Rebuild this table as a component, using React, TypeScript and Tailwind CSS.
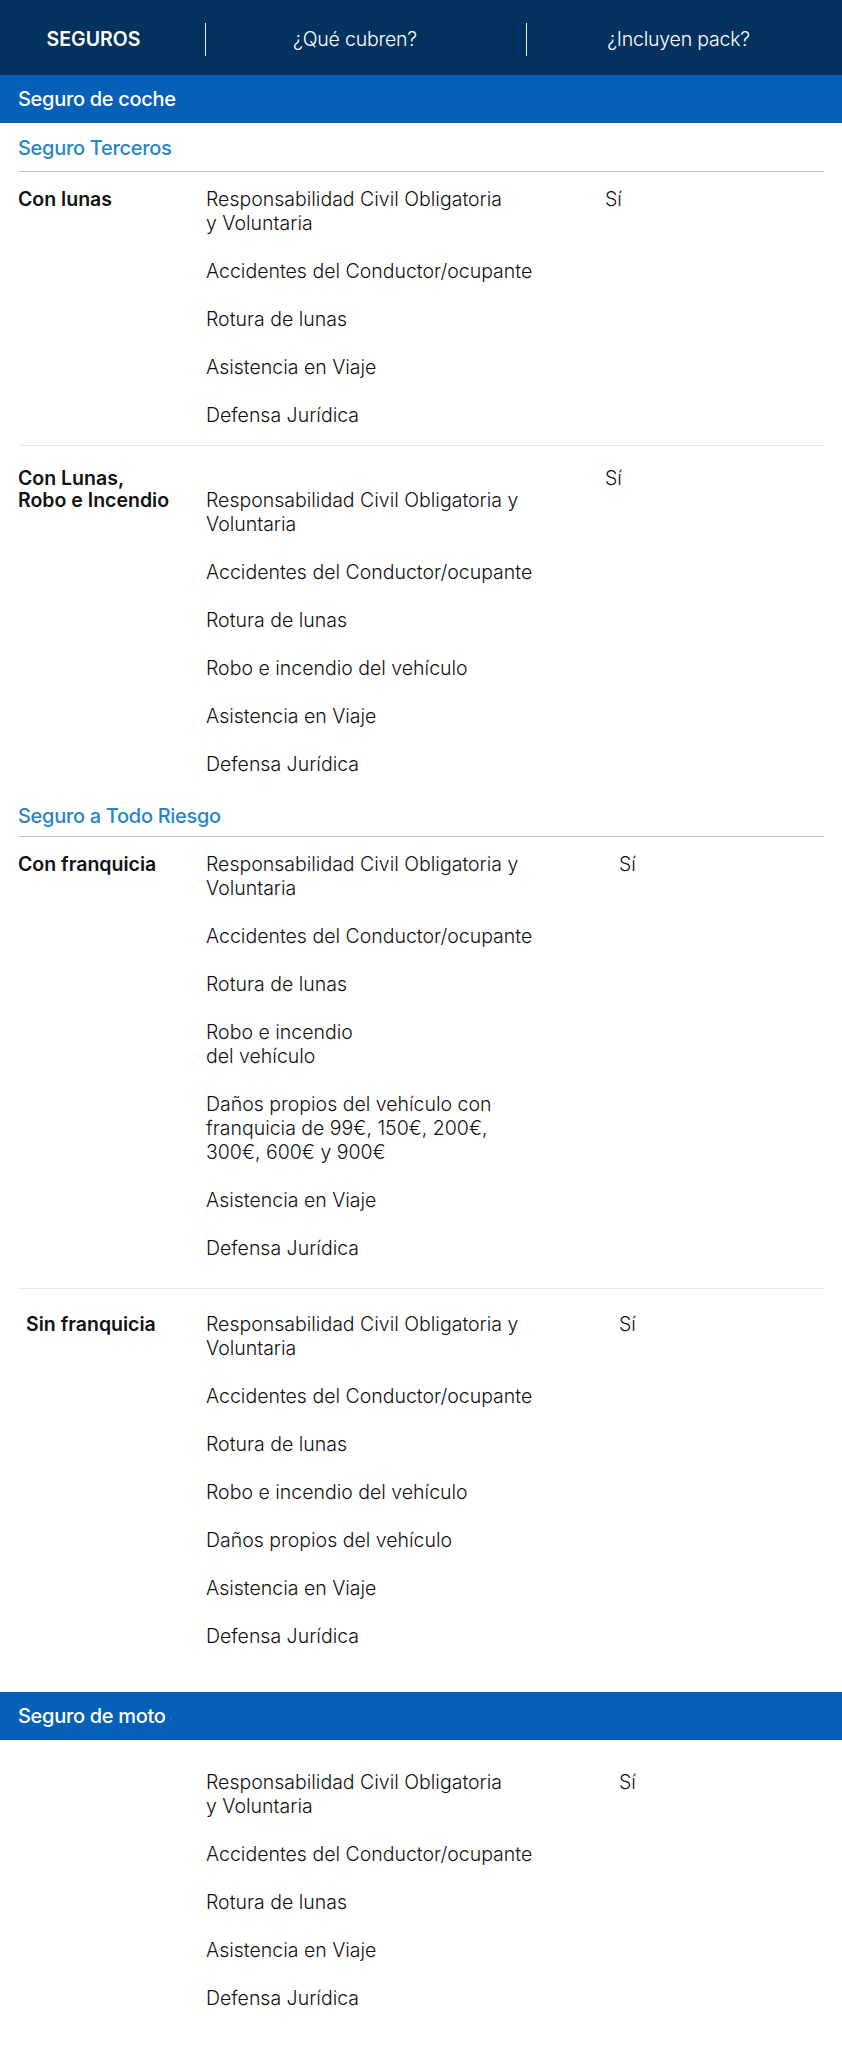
import React from "react";

type Item = React.ReactNode;

const RC: Item = (
  <>
    Responsabilidad Civil Obligatoria
    <br />y Voluntaria
  </>
);
const RC2: Item = (
  <>
    Responsabilidad Civil Obligatoria y
    <br />
    Voluntaria
  </>
);

function Row({
  label,
  items,
  siX,
  className,
  itemsTop = false,
  labelIndent = false,
}: {
  label?: React.ReactNode;
  items: Item[];
  siX: "a" | "b";
  className?: string;
  itemsTop?: boolean;
  labelIndent?: boolean;
}) {
  return (
    <div className={"flex " + (className ?? "")}>
      <div
        className={
          "w-[188px] shrink-0 font-semibold text-[19.5px] leading-[22px] text-[#121212] pt-px " +
          (labelIndent ? "pl-[8px]" : "")
        }
      >
        {label}
      </div>
      <div
        className={
          "flex flex-col gap-[24px] shrink-0 " +
          (siX === "a" ? "w-[399px] " : "w-[413px] ") +
          (itemsTop ? "pt-[22px]" : "")
        }
      >
        {items.map((it, i) => (
          <div key={i} className="text-[19.5px] leading-[24px] text-[#121212] font-light">
            {it}
          </div>
        ))}
      </div>
      <div className="text-[19.5px] leading-[24px] text-[#121212] font-light">Sí</div>
    </div>
  );
}

function Bar({ children }: { children: React.ReactNode }) {
  return (
    <div className="h-[48px] bg-[#0560b9] px-[18px] flex items-center text-white text-[20px] font-medium tracking-[-0.3px]">
      {children}
    </div>
  );
}

export default function App() {
  return (
    <div className="w-[842px] min-h-[2045px] bg-white font-[Inter,sans-serif]">
      {/* header */}
      <div className="h-[75px] bg-[#04325f] flex items-center pt-[4px] text-white">
        <div className="w-[205px] pr-[18px] text-center text-[19.5px] font-semibold">SEGUROS</div>
        <div className="w-px h-[33px] bg-white/90" />
        <div className="w-[320px] pr-[22px] text-center text-[19.5px] font-light tracking-[-0.2px]">¿Qué cubren?</div>
        <div className="w-px h-[33px] bg-white/90" />
        <div className="flex-1 pr-[12px] text-center text-[19.5px] font-light tracking-[-0.2px]">¿Incluyen pack?</div>
      </div>

      <Bar>Seguro de coche</Bar>

      <div className="px-[18px]">
        <div className="pt-[13px] pb-[11px] border-b border-[#c4c4c4] text-[#2a84c6] text-[20px] leading-[24px] font-medium tracking-[-0.3px]">
          Seguro Terceros
        </div>

        <Row
          className="pt-[15px] pb-[18px] border-b border-[#e8e8e8]"
          label="Con lunas"
          siX="a"
          items={[
            RC,
            "Accidentes del Conductor/ocupante",
            "Rotura de lunas",
            "Asistencia en Viaje",
            "Defensa Jurídica",
          ]}
        />

        <Row
          className="pt-[20px]"
          label={
            <>
              Con Lunas,
              <br />
              Robo e Incendio
            </>
          }
          siX="a"
          itemsTop
          items={[
            RC2,
            "Accidentes del Conductor/ocupante",
            "Rotura de lunas",
            "Robo e incendio del vehículo",
            "Asistencia en Viaje",
            "Defensa Jurídica",
          ]}
        />

        <div className="pt-[28px] pb-[8px] border-b border-[#c4c4c4] text-[#2a84c6] text-[20px] leading-[24px] font-medium tracking-[-0.3px]">
          Seguro a Todo Riesgo
        </div>

        <Row
          className="pt-[15px] pb-[28px] border-b border-[#e8e8e8]"
          label="Con franquicia"
          siX="b"
          items={[
            RC2,
            "Accidentes del Conductor/ocupante",
            "Rotura de lunas",
            <>
              Robo e incendio
              <br />
              del vehículo
            </>,
            <>
              Daños propios del vehículo con
              <br />
              franquicia de 99€, 150€, 200€,
              <br />
              300€, 600€ y 900€
            </>,
            "Asistencia en Viaje",
            "Defensa Jurídica",
          ]}
        />

        <Row
          className="pt-[23px] pb-[44px]"
          label="Sin franquicia"
          labelIndent
          siX="b"
          items={[
            RC2,
            "Accidentes del Conductor/ocupante",
            "Rotura de lunas",
            "Robo e incendio del vehículo",
            "Daños propios del vehículo",
            "Asistencia en Viaje",
            "Defensa Jurídica",
          ]}
        />
      </div>

      <Bar>Seguro de moto</Bar>

      <div className="px-[18px]">
        <Row
          className="pt-[30px] pb-[35px]"
          siX="b"
          items={[
            RC,
            "Accidentes del Conductor/ocupante",
            "Rotura de lunas",
            "Asistencia en Viaje",
            "Defensa Jurídica",
          ]}
        />
      </div>
    </div>
  );
}
